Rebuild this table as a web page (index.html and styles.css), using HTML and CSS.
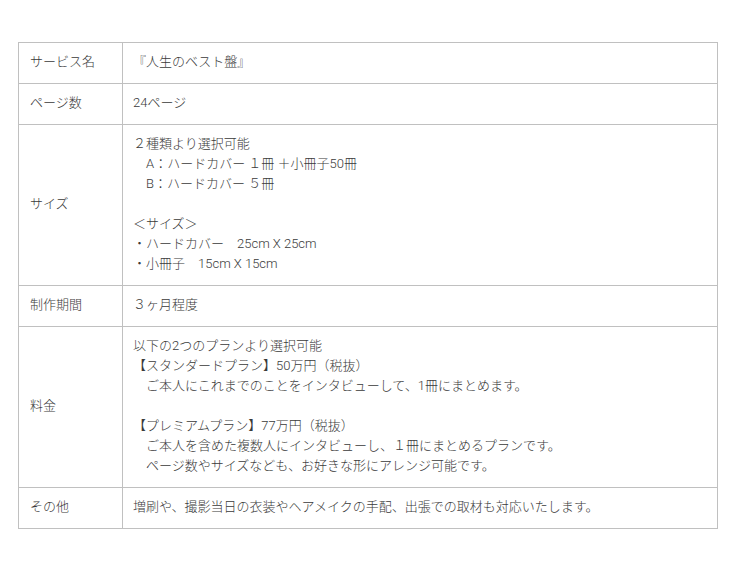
FILE: index.html
```html
<!DOCTYPE html>
<html lang="ja">
<head>
<meta charset="utf-8">
<link rel="stylesheet" href="styles.css">
</head>
<body>
<div class="wrap">
<table class="spec">
<tr><th>サービス名</th><td>『人生のベスト盤』</td></tr>
<tr><th>ページ数</th><td>24ページ</td></tr>
<tr><th>サイズ</th><td>２種類より選択可能<br>　A：ハードカバー １冊 ＋小冊子50冊<br>　B：ハードカバー ５冊<br><br>＜サイズ＞<br>・ハードカバー　25cm X 25cm<br>・小冊子　15cm X 15cm</td></tr>
<tr><th>制作期間</th><td>３ヶ月程度</td></tr>
<tr><th>料金</th><td>以下の2つのプランより選択可能<br>【スタンダードプラン】50万円（税抜）<br>　ご本人にこれまでのことをインタビューして、1冊にまとめます。<br><br>【プレミアムプラン】77万円（税抜）<br>　ご本人を含めた複数人にインタビューし、１冊にまとめるプランです。<br>　ページ数やサイズなども、お好きな形にアレンジ可能です。</td></tr>
<tr><th>その他</th><td>増刷や、撮影当日の衣装やヘアメイクの手配、出張での取材も対応いたします。</td></tr>
</table>
</div>
</body>
</html>
```
FILE: styles.css
```css
html, body {
  margin: 0;
  padding: 0;
  background: #fff;
}
.wrap {
  padding: 42px 22px 0 18px;
}
.spec {
  width: 700px;
  border-collapse: collapse;
  font-family: Roboto, "Noto Sans CJK JP", sans-serif;
  font-size: 13px;
  line-height: 20px;
  color: #3a3a3a;
  font-weight: 300;
}
.spec th,
.spec td {
  border: 1px solid #c0c0c0;
  padding: 9px 10px 11px;
  text-align: left;
  vertical-align: middle;
  font-weight: 300;
}
.spec th {
  width: 82px;
  padding-left: 11px;
}
```
